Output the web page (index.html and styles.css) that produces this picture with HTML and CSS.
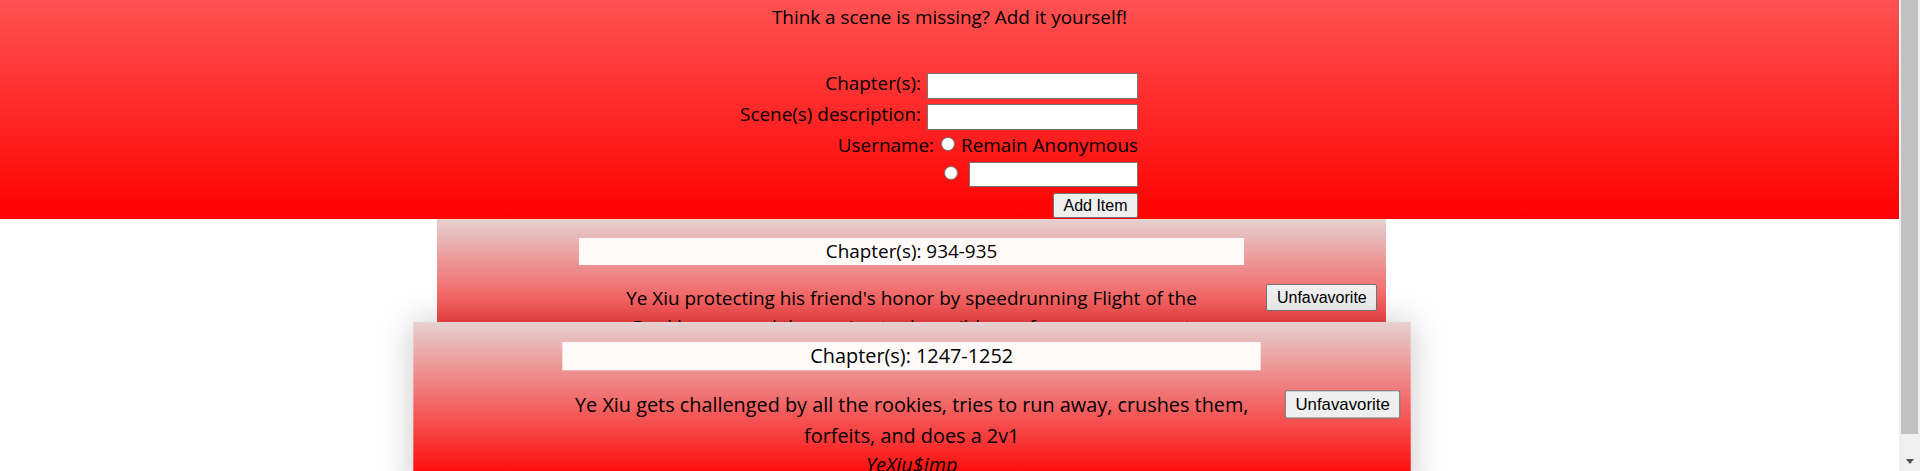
FILE: index.html
```html
<!DOCTYPE html>
<html lang="en">
<head>
<meta charset="utf-8">
<title>Scenes</title>
<link rel="stylesheet" href="styles.css">
</head>
<body>
<div class="page">
  <header class="hero">
    <p class="hero-title">Think a scene is missing? Add it yourself!</p>
    <div class="form-wrap">
      <form class="add-form">
        <div class="row row-chapter"><label class="lbl">Chapter(s):</label><input class="field" type="text"></div>
        <div class="row row-desc"><label class="lbl">Scene(s) description:</label><input class="field" type="text"></div>
        <div class="row row-user"><span class="lbl">Username:</span><input class="radio" type="radio" name="user"><span class="lbl lbl-anon">Remain Anonymous</span></div>
        <div class="row row-name"><input class="radio" type="radio" name="user"><input class="field field-name" type="text"></div>
        <div class="row row-btn"><button class="btn" type="button">Add Item</button></div>
      </form>
    </div>
  </header>
  <main class="cards">
    <article class="card">
      <div class="chapter">Chapter(s): 934-935</div>
      <div class="card-body">
        <p class="desc">Ye Xiu protecting his friend's honor by speedrunning Flight of the Bookkeeper and then going to the guild area for some payment</p>
        <button class="btn btn-fav" type="button">Unfavavorite</button>
        <p class="user">YeXiu$imp</p>
      </div>
    </article>
    <article class="card card-hover">
      <div class="chapter">Chapter(s): 1247-1252</div>
      <div class="card-body">
        <p class="desc">Ye Xiu gets challenged by all the rookies, tries to run away, crushes them, forfeits, and does a 2v1</p>
        <button class="btn btn-fav" type="button">Unfavavorite</button>
        <p class="user">YeXiu$imp</p>
      </div>
    </article>
  </main>
</div>
<div class="scrollbar">
  <div class="thumb"></div>
  <div class="arrow-box"><span class="arrow"></span></div>
</div>
</body>
</html>
```

FILE: styles.css
```css
html, body {
  margin: 0;
  padding: 0;
}

body {
  display: flex;
  height: 471px;
  overflow: hidden;
  background: #ffffff;
  font-family: "Open Sans", "Noto Sans", sans-serif;
  font-size: 18.9px;
  color: #000000;
}

.page {
  flex: 1;
  min-width: 0;
}

/* ---------- header ---------- */
.hero {
  height: 219px;
  box-sizing: border-box;
  background: linear-gradient(to bottom, #ff5252, #ff0000);
  padding-top: 5px;
}

.hero-title {
  margin: 0;
  text-align: center;
  line-height: 25px;
}

.form-wrap {
  display: flex;
  justify-content: flex-end;
  padding-right: 761px;
  margin-top: 43px;
}

.add-form {
  display: flex;
  flex-direction: column;
  align-items: flex-end;
}

.row {
  display: flex;
  align-items: center;
  justify-content: flex-end;
}

.row-chapter { height: 26px; }
.row-desc { height: 26px; margin-top: 5px; }
.row-user { height: 26px; margin-top: 3px; }
.row-name { height: 25px; margin-top: 3px; }
.row-btn { height: 25px; margin-top: 6px; }

.lbl {
  line-height: 25px;
  padding-bottom: 6px;
  white-space: nowrap;
}

.row-user .lbl {
  padding-bottom: 2px;
}

.field {
  box-sizing: border-box;
  width: 211px;
  height: 26px;
  margin: 0 0 0 6px;
  padding: 1px 2px;
  border: 1px solid #767676;
  border-radius: 0;
  background: #ffffff;
  font: inherit;
}

.field-name {
  width: 169px;
  height: 25px;
  margin-left: 11px;
}

.radio {
  -webkit-appearance: none;
  appearance: none;
  box-sizing: border-box;
  width: 14px;
  height: 14px;
  margin: 0 6px 4px 7px;
  border: 1px solid #767676;
  border-radius: 50%;
  background: #ffffff;
}

.row-name .radio {
  margin: 0 0 4px 0;
}

.btn {
  box-sizing: border-box;
  height: 25px;
  padding: 0 9.5px;
  border: 1px solid #767676;
  border-radius: 2px;
  background: #efefef;
  color: #000000;
  font-family: "Liberation Sans", Arial, sans-serif;
  font-size: 16px;
  line-height: 1;
}

/* ---------- cards ---------- */
.cards {
  margin-left: 23%;
  width: 50%;
}

.card {
  box-sizing: border-box;
  padding: 19px 0 19px;
  background: linear-gradient(to bottom, #e6d1d1, #ff0000 90%);
}

.chapter {
  width: 70%;
  margin: 0 auto 19px;
  height: 27px;
  line-height: 27px;
  text-align: center;
  background: #fffafa;
}

.card-body {
  display: grid;
  grid-template-columns: 15% 70% 15%;
  align-items: start;
}

.desc {
  grid-column: 2;
  grid-row: 1;
  margin: 0;
  text-align: center;
  line-height: 28.6px;
}

.user {
  grid-column: 2;
  grid-row: 2;
  margin: 0;
  text-align: center;
  line-height: 28.6px;
  font-style: italic;
}

.btn-fav {
  grid-column: 3;
  grid-row: 1;
  justify-self: end;
  height: 27px;
  margin-right: 9px;
}

.card-hover {
  margin-top: -67px;
  transform: scale(1.05);
  transform-origin: top center;
  box-shadow: 0 0 30px rgba(0, 0, 0, 0.22);
}

/* ---------- scrollbar ---------- */
.scrollbar {
  width: 21px;
  flex: none;
  display: flex;
  flex-direction: column;
  background: #f0f0f0;
}

.thumb {
  height: 434px;
  margin: 0 2px;
  background: #c1c1c1;
}

.arrow-box {
  flex: 1;
  display: flex;
  justify-content: center;
  align-items: flex-end;
  padding-bottom: 7px;
}

.arrow {
  width: 0;
  height: 0;
  border-left: 4.5px solid transparent;
  border-right: 4.5px solid transparent;
  border-top: 5px solid #505050;
}
```
